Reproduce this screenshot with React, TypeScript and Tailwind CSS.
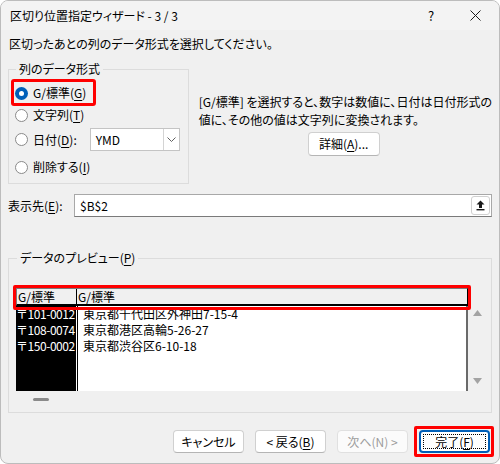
import React from 'react';

function U({ children }: { children: React.ReactNode }) {
  return <span className="underline underline-offset-2">{children}</span>;
}

function Radio({ checked }: { checked?: boolean }) {
  if (checked) {
    return (
      <span className="w-[13px] h-[13px] rounded-full bg-[#005fb8] flex items-center justify-center shrink-0">
        <span className="w-[5px] h-[5px] rounded-full bg-white" />
      </span>
    );
  }
  return <span className="w-[13px] h-[13px] rounded-full border border-[#8a8a8a] bg-white shrink-0" />;
}

function Btn({ children, disabled, primary }: { children: React.ReactNode; disabled?: boolean; primary?: boolean }) {
  return (
    <div
      className={
        'relative w-[71px] h-[23px] rounded-[4px] flex items-center justify-center text-[12px] ' +
        (primary
          ? 'bg-white border-2 border-[#005fb8] text-black'
          : disabled
            ? 'bg-[#fbfbfb] border border-[#e0e0e0] text-[#9d9d9d]'
            : 'bg-white border border-[#d0d0d0] border-b-[#b5b5b5] text-black')
      }
    >
      {primary && <div className="absolute inset-[2px] border border-dotted border-black" />}
      {children}
    </div>
  );
}

export default function App() {
  const rows = [
    ['〒101-0012', '東京都千代田区外神田7-15-4'],
    ['〒108-0074', '東京都港区高輪5-26-27'],
    ['〒150-0002', '東京都渋谷区6-10-18'],
  ];

  return (
    <div className="w-[500px] h-[464px] bg-white font-['Noto_Sans_CJK_JP','Yu_Gothic_UI',sans-serif] [font-feature-settings:'palt'] text-[12px] text-black">
      <div className="h-full border border-[#bcbcbc] rounded-[8px] bg-[#f0f0f0] overflow-hidden flex flex-col">
        {/* Title bar */}
        <div className="h-[29px] bg-[#f3f3f3] flex items-center shrink-0">
          <span className="pl-[9px] flex-1 leading-none">区切り位置指定ウィザード - 3 / 3</span>
          <span className="w-[44px] text-center text-[13px]">?</span>
          <span className="w-[44px] mr-[2px] flex justify-center">
            <svg width="11" height="11" viewBox="0 0 11 11">
              <path d="M0.5 0.5l10 10M10.5 0.5l-10 10" stroke="#1a1a1a" strokeWidth="1" />
            </svg>
          </span>
        </div>

        {/* Body */}
        <div className="px-[7px] flex flex-col">
          <div className="mt-[6px] h-[16px] leading-[16px] pl-[1px]">区切ったあとの列のデータ形式を選択してください。</div>

          <div className="mt-[9px] flex">
            <fieldset className="w-[184px] h-[123px] border border-[#dcdcdc] px-[6px]">
              <legend className="px-[3px] ml-[1px] leading-[16px]">列のデータ形式</legend>
              <div className="pt-[5px] flex flex-col">
                <div className="relative h-[22px] flex items-center gap-[5px]">
                  <div className="absolute -left-[4px] -top-[3px] w-[85px] h-[27px] border-[3px] border-[#ff0000] rounded-[3px]" />
                  <Radio checked />
                  <span>G/標準(<U>G</U>)</span>
                </div>
                <div className="h-[22px] flex items-center gap-[5px]">
                  <Radio />
                  <span>文字列(<U>T</U>)</span>
                </div>
                <div className="h-[27px] flex items-center gap-[5px] pr-[2px]">
                  <Radio />
                  <span>日付(<U>D</U>):</span>
                  <div className="ml-auto w-[90px] h-[23px] bg-white border border-[#c4c4c4] flex">
                    <span className="flex-1 pl-[5px] flex items-center">YMD</span>
                    <span className="w-[16px] border-l border-[#d4d4d4] flex items-center justify-center">
                      <svg width="9" height="5" viewBox="0 0 9 5">
                        <path d="M0.5 0.5l4 4 4-4" stroke="#606060" fill="none" strokeWidth="1" />
                      </svg>
                    </span>
                  </div>
                </div>
                <div className="mt-[3px] h-[22px] flex items-center gap-[5px]">
                  <Radio />
                  <span>削除する(<U>I</U>)</span>
                </div>
              </div>
            </fieldset>

            <div className="ml-[10px] mt-[32px] flex flex-col flex-1">
              <div className="leading-[18px] whitespace-nowrap">
                [G/標準] を選択すると、数字は数値に、日付は日付形式の
                <br />
                値に、その他の値は文字列に変換されます。
              </div>
              <div className="mt-[3px] ml-[109px] w-[72px] h-[24px] bg-white border border-[#d0d0d0] border-b-[#b5b5b5] rounded-[4px] flex items-center justify-center">
                詳細(<U>A</U>)...
              </div>
            </div>
          </div>

          {/* Destination */}
          <div className="mt-[10px] flex items-center h-[23px]">
            <span className="w-[66px]">表示先(<U>E</U>):</span>
            <div className="flex-1 h-[23px] bg-white border border-[#a8a8a8] border-b-[#7a7a7a] flex items-center pl-[5px] pr-[1px]">
              <span className="flex-1">$B$2</span>
              <span className="w-[19px] h-[19px] border border-[#d0d0d0] rounded-[3px] bg-white flex items-center justify-center">
                <svg width="9" height="11" viewBox="0 0 9 11">
                  <path d="M4.5 0.5L0.5 4.5H3V8H6V4.5H8.5Z" fill="#1a1a1a" />
                  <rect x="0.5" y="9" width="8" height="1.4" fill="#1a1a1a" />
                </svg>
              </span>
            </div>
          </div>

          {/* Preview */}
          <fieldset className="mt-[33px] w-[484px] h-[163px] border border-[#dcdcdc] pl-[7px]">
            <legend className="px-[3px] ml-[1px] leading-[16px]">
              データのプレビュー(<U>P</U>)
            </legend>
            <div className="pt-[22px] flex">
              <div className="w-[452px] h-[103px] flex flex-col bg-white [font-feature-settings:normal]">
                <div className="relative h-[18px] flex bg-[#f0f0f0] border-t border-l border-[#7a7a7a] border-b-2 border-b-black border-r border-r-black">
                  <div className="absolute -left-[4px] -top-[4px] w-[458px] h-[25px] border-[3px] border-[#ff0000] rounded-[2px]" />
                  <div className="w-[60px] border-r border-black pl-[1px] leading-[16px]">G/標準</div>
                  <div className="flex-1 pl-[1px] leading-[16px]">G/標準</div>
                </div>
                <div className="flex-1 flex border-r-2 border-[#6a6a6a]">
                  <div className="w-[60px] bg-black text-white tracking-[-0.45px]">
                    {rows.map(r => (
                      <div key={r[0]} className="h-[16px] leading-[16px] whitespace-nowrap">{r[0]}</div>
                    ))}
                  </div>
                  <div className="w-[1px] bg-white" />
                  <div className="flex-1 border-l border-black pl-[5px]">
                    {rows.map(r => (
                      <div key={r[1]} className="h-[16px] leading-[16px] whitespace-nowrap">{r[1]}</div>
                    ))}
                  </div>
                </div>
              </div>
              <div className="w-[19px] h-[103px] flex flex-col items-center justify-between pt-[22px] pb-[7px]">
                <svg width="9" height="6" viewBox="0 0 9 6">
                  <path d="M4.5 0L9 6H0Z" fill="#a3a3a3" />
                </svg>
                <svg width="9" height="6" viewBox="0 0 9 6">
                  <path d="M0 0H9L4.5 6Z" fill="#a3a3a3" />
                </svg>
              </div>
            </div>
            <div className="mt-[7px] ml-[17px] w-[16px] h-[3px] rounded-full bg-[#8a8a8a]" />
          </fieldset>

          {/* Buttons */}
          <div className="mt-[17px] pr-[2px] flex justify-end gap-[11px]">
            <Btn>キャンセル</Btn>
            <Btn>&lt; 戻る(<U>B</U>)</Btn>
            <Btn disabled>次へ(N) &gt;</Btn>
            <div className="relative">
              <div className="absolute -left-[5px] -top-[4px] w-[80px] h-[31px] border-[3px] border-[#ff0000] rounded-[2px]" />
              <Btn primary>完了(<U>F</U>)</Btn>
            </div>
          </div>
        </div>
      </div>
    </div>
  );
}
